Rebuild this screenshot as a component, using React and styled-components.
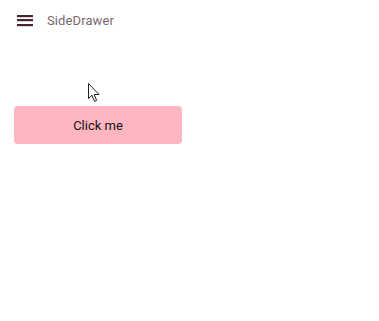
import React from "react";
import styled, { createGlobalStyle } from "styled-components";

const Global = createGlobalStyle`
  html, body { margin: 0; padding: 0; background: #fff; }
  body { font-family: Roboto, "Noto Sans", sans-serif; }
`;

const Page = styled.div`
  position: relative;
  width: 379px;
  height: 321px;
  padding: 0 14px;
  box-sizing: border-box;
`;

const Header = styled.header`
  display: flex;
  align-items: center;
  gap: 14px;
  height: 40px;
  padding-left: 3px;
`;

const Menu = styled.button`
  display: flex;
  flex-direction: column;
  justify-content: space-between;
  width: 16px;
  height: 11px;
  padding: 0;
  border: 0;
  background: none;
`;

const Bar = styled.span`
  display: block;
  height: 2px;
  width: 100%;
  background: #3a2a33;
  box-shadow: 0 1px 0 #f3c9d3;
`;

const Title = styled.span`
  font-size: 13px;
  color: #7a6770;
  letter-spacing: 0.1px;
`;

const Body = styled.main`
  padding-top: 66px;
`;

const Button = styled.button`
  display: flex;
  align-items: center;
  justify-content: center;
  width: 168px;
  height: 38px;
  border: 0;
  border-radius: 4px;
  background: #ffb6c1;
  color: #111;
  font-family: Roboto, "Noto Sans", sans-serif;
  font-size: 13px;
`;

const Cursor = styled.svg`
  position: absolute;
  left: 88px;
  top: 83px;
`;

export default function App() {
  return (
    <>
      <Global />
      <Page>
        <Header>
          <Menu aria-label="menu">
            <Bar />
            <Bar />
            <Bar />
          </Menu>
          <Title>SideDrawer</Title>
        </Header>
        <Body>
          <Button>Click me</Button>
        </Body>
        <Cursor width="13" height="20" viewBox="0 0 13 20">
          <path
            d="M0.5 0.5 L0.5 15.5 L4 12.2 L6.5 18.3 L8.6 17.4 L6.2 11.5 L11 11.5 Z"
            fill="#fff"
            stroke="#222"
            strokeWidth="1"
            strokeLinejoin="miter"
          />
        </Cursor>
      </Page>
    </>
  );
}
